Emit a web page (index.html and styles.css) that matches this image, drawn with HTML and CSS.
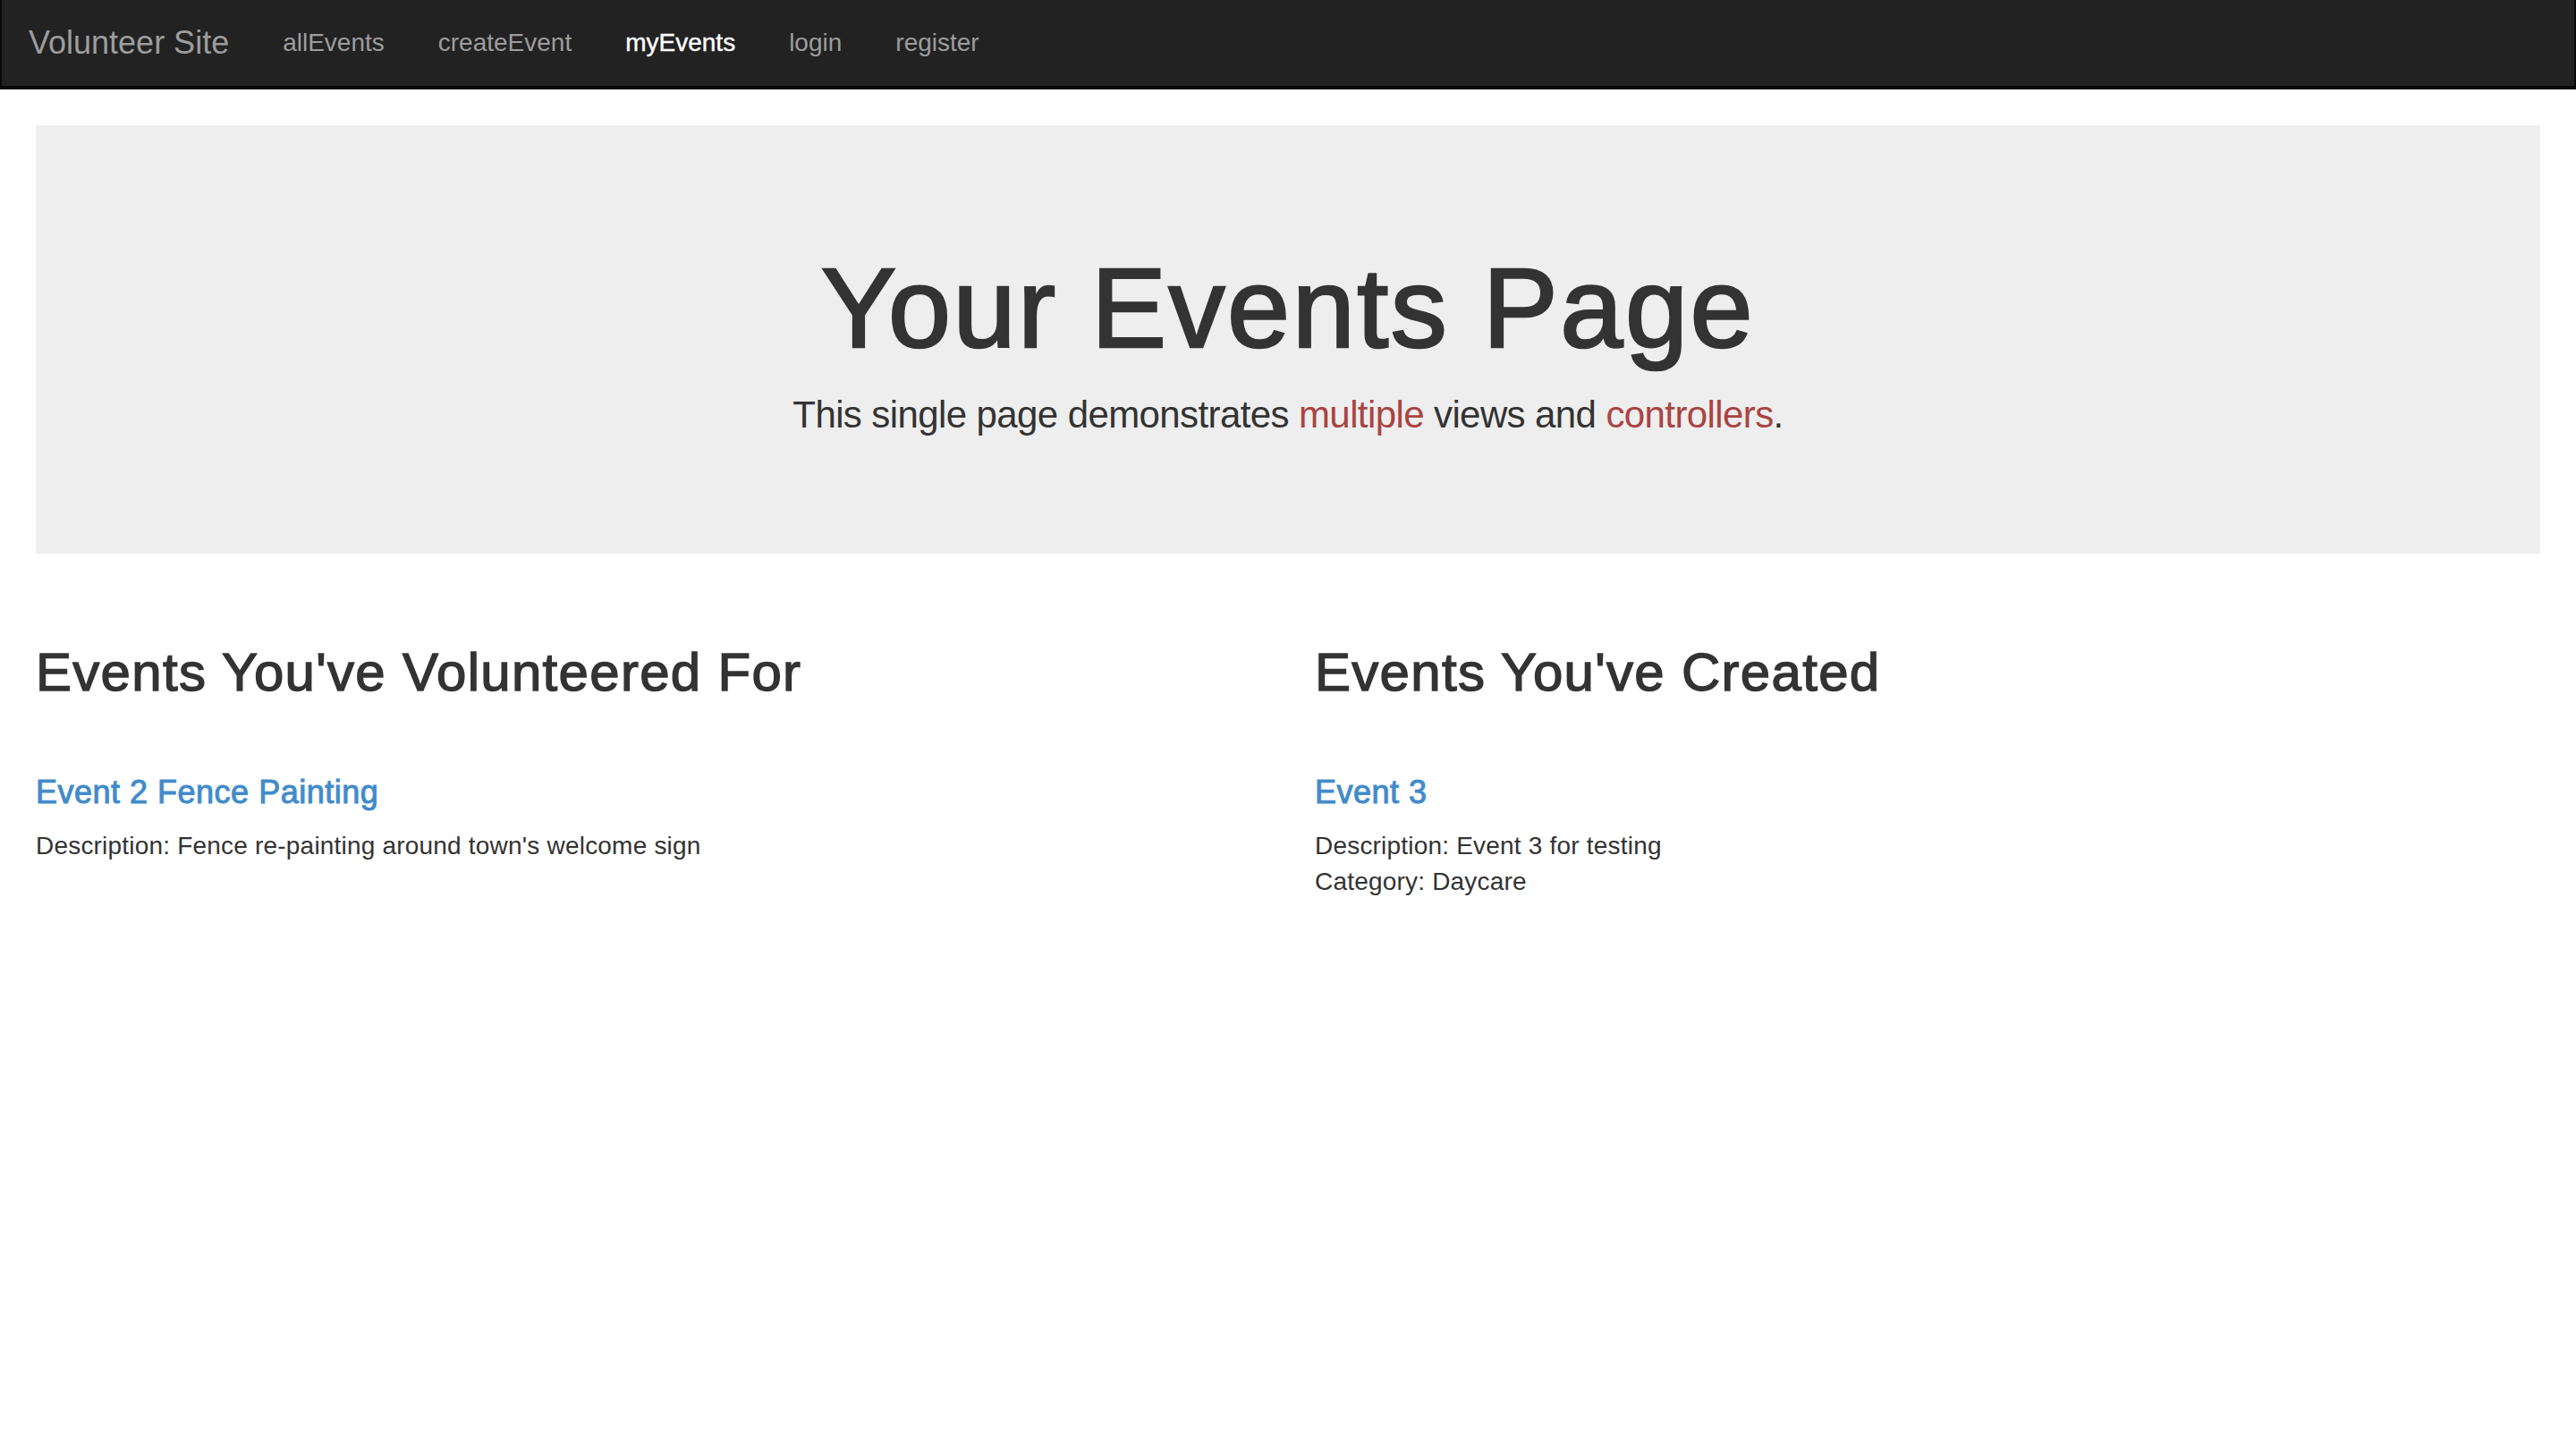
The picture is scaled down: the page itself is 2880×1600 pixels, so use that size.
FILE: index.html
```html
<!DOCTYPE html>
<html lang="en">
<head>
<meta charset="utf-8">
<title>Volunteer Site</title>
<link rel="stylesheet" href="styles.css">
</head>
<body>
<nav class="navbar">
  <a class="brand" href="#">Volunteer Site</a>
  <ul class="nav">
    <li><a href="#">allEvents</a></li>
    <li><a href="#">createEvent</a></li>
    <li class="active"><a href="#">myEvents</a></li>
    <li><a href="#">login</a></li>
    <li><a href="#">register</a></li>
  </ul>
</nav>
<main class="container">
  <section class="jumbotron">
    <h1>Your Events Page</h1>
    <p>This single page demonstrates <span class="danger">multiple</span> views and <span class="danger">controllers</span>.</p>
  </section>
  <div class="row">
    <div class="col">
      <h2>Events You've Volunteered For</h2>
      <div class="event">
        <h4><a href="#">Event 2 Fence Painting</a></h4>
        <p>Description: Fence re-painting around town's welcome sign</p>
      </div>
    </div>
    <div class="col">
      <h2>Events You've Created</h2>
      <div class="event">
        <h4><a href="#">Event 3</a></h4>
        <p>Description: Event 3 for testing</p>
        <p>Category: Daycare</p>
      </div>
    </div>
  </div>
</main>
</body>
</html>
```
FILE: styles.css
```css
* { box-sizing: border-box; }
html, body { margin: 0; padding: 0; background: #fff; }
body {
  font-family: "Liberation Sans", Arial, Helvetica, sans-serif;
  font-size: 28px;
  line-height: 40px;
  color: #333;
}
a { text-decoration: none; }

.navbar {
  display: flex;
  align-items: center;
  height: 100px;
  background: #222;
  border: solid #080808;
  border-width: 0 2px 4px 2px;
  padding-left: 30px;
}
.brand {
  font-size: 36px;
  line-height: 40px;
  color: #9d9d9d;
  padding: 28px 30px 28px 0;
}
.nav {
  display: flex;
  list-style: none;
  margin: 0;
  padding: 0;
}
.nav a {
  display: block;
  font-size: 28px;
  line-height: 40px;
  padding: 28px 30px;
  color: #9d9d9d;
}
.nav .active a {
  color: #fff;
  -webkit-text-stroke: 0.4px #fff;
}

.container { padding: 0 40px; }

.jumbotron {
  margin: 40px 0 60px;
  padding: 96px 120px;
  background: #eee;
  text-align: center;
}
.jumbotron h1 {
  margin: 40px 0 20px;
  font-size: 126px;
  line-height: 138.6px;
  font-weight: 500;
  color: #333;
  letter-spacing: 2.5px;
  -webkit-text-stroke: 2.6px #333;
}
.jumbotron p {
  margin: 0 0 30px;
  font-size: 42px;
  line-height: 58.8px;
  font-weight: 300;
  letter-spacing: -0.6px;
}
.danger { color: #a94442; }

.row {
  display: grid;
  grid-template-columns: 1fr 1fr;
  column-gap: 60px;
}
h2 {
  margin: 40px 0 0;
  font-size: 60px;
  line-height: 66px;
  font-weight: 500;
  letter-spacing: 1.3px;
  -webkit-text-stroke: 1.4px #333;
}
.event { padding-top: 81px; }
h4 {
  margin: 0 0 20px;
  font-size: 36px;
  line-height: 39.6px;
  font-weight: 500;
}
h4 a {
  color: #428bca;
  letter-spacing: 0.5px;
  -webkit-text-stroke: 1px #428bca;
}
.event p { margin: 0; letter-spacing: 0.2px; }
```
